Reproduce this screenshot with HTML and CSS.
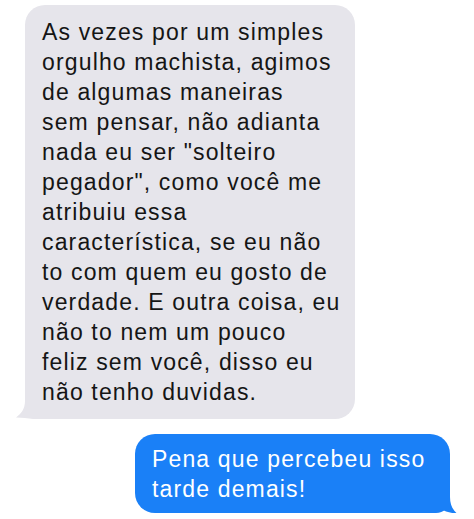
FILE: index.html
```html
<!DOCTYPE html>
<html lang="pt">
<head>
    <meta charset="utf-8">
    <title>Mensagens</title>
    <link rel="stylesheet" href="styles.css">
</head>
<body>

    <div class="thread">
        <div class="bubble received">
            <p>As vezes por um simples<br>
            orgulho machista, agimos<br>
            de algumas maneiras<br>
            sem pensar, não adianta<br>
            nada eu ser "solteiro<br>
            pegador", como você me<br>
            atribuiu essa<br>
            característica, se eu não<br>
            to com quem eu gosto de<br>
            verdade. E outra coisa, eu<br>
            não to nem um pouco<br>
            feliz sem você, disso eu<br>
            não tenho duvidas.</p>
            <svg class="tail tail-left" width="30" height="30" viewBox="0 0 30 30">
                <path d="M9 0 H30 V30 H17 C12 29 6 29 0 28.5 C5 25 9 20 9 12 Z" fill="#e6e5eb"/>
            </svg>
        </div>

        <div class="bubble sent">
            <p>Pena que percebeu isso<br>
            tarde demais!</p>
            <svg class="tail tail-right" width="30" height="31" viewBox="0 0 30 31">
                <path d="M0 0 H22 V14 C22 22 25 27 29 30.5 C24 30.5 17 28.5 13 26 C10 28 6 30 0 30 Z" fill="#1a80f7"/>
            </svg>
        </div>
    </div>

</body>
</html>
```

FILE: styles.css
```css
body {
    margin: 0;
    background-color: #fff;
    font-family: 'Liberation Sans', Arial, Helvetica, sans-serif;
}

.thread {
    display: flex;
    flex-direction: column;
    padding-top: 5px;
}

.bubble {
    position: relative;
    box-sizing: border-box;
    border-radius: 20px;
}

.bubble p {
    position: relative;
    z-index: 1;
    margin: 0;
    font-size: 23px;
    line-height: 30px;
    letter-spacing: 1.15px;
    white-space: nowrap;
}

.received {
    margin-left: 25px;
    width: 330px;
    padding: 12px 17px 12px 17px;
    background-color: #e6e5eb;
    color: #151515;
}

.sent {
    margin-top: 15px;
    margin-left: 135px;
    width: 315px;
    padding: 10px 17px 9px 17px;
    background-color: #1a80f7;
    color: #fff;
    border-bottom-right-radius: 14px;
}

.tail {
    position: absolute;
    display: block;
}

.tail-left {
    left: -9px;
    bottom: 0;
}

.tail-right {
    right: -8px;
    bottom: -1px;
}
```
